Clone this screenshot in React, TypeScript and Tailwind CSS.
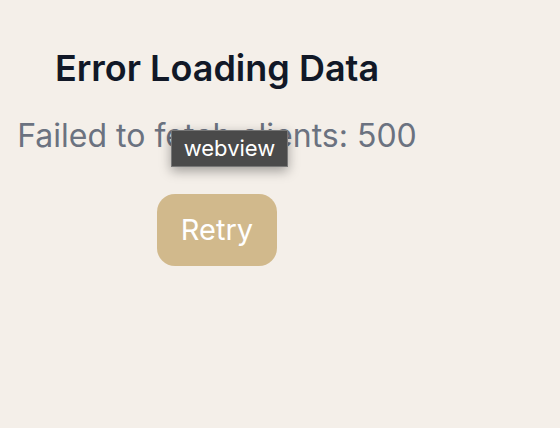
export default function App() {
  return (
    <div
      className="min-h-screen bg-[#f4efe9] relative"
      style={{ fontFamily: 'Inter, "Noto Sans", sans-serif' }}
    >
      <div className="w-[434px] flex flex-col items-center pt-[44px] text-center">
        <h1 className="text-[36px] leading-[48px] font-semibold text-[#111827]">
          Error Loading Data
        </h1>
        <p className="mt-[24px] text-[32px] leading-[40px] text-[#6b7280]">
          Failed to fetch clients: 500
        </p>
        <button className="mt-[38px] w-[120px] h-[72px] rounded-[18px] bg-[#d1b98c] text-white text-[29px]">
          Retry
        </button>
      </div>
      <div className="absolute left-[171px] top-[130px] w-[117px] h-[37px] bg-[#4a4a4a] border border-[#777] shadow-[0_4px_12px_rgba(0,0,0,0.35)] flex items-center justify-center text-white text-[22px]">
        webview
      </div>
    </div>
  )
}
